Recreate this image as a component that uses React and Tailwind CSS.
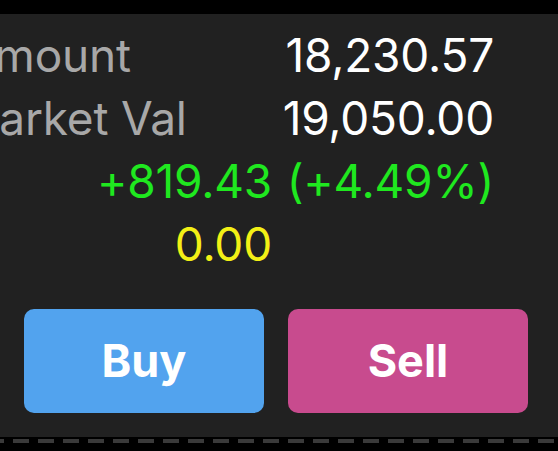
const font = { fontFamily: 'Inter, "Noto Sans", sans-serif' };

const rows = [
    { label: 'Amount', value: '18,230.57', shift: '-ml-[3px]' },
    { label: 'Market Val', value: '19,050.00', shift: '-ml-[8px]' }
];

function App() {
    return (
        <div className="w-[558px] h-[451px] bg-black overflow-hidden flex flex-col" style={font}>
            <div className="h-[14px] shrink-0" />
            <div className="bg-[#212121] pt-[10px] pb-[24px] overflow-hidden">
                {/* 持仓明细 */}
                <div className="-ml-[34px] w-[528px] grid grid-cols-[106px_200px_222px] text-[46px] leading-[63px] tracking-[-0.2px]">
                    {rows.map((row) => (
                        <div key={row.label} className="contents">
                            <div className={`text-[#a8a8a8] whitespace-nowrap ${row.shift}`}>{row.label}</div>
                            <div className="col-span-2 text-right text-white">{row.value}</div>
                        </div>
                    ))}
                    <div />
                    <div className="text-right text-[#1fe81f] whitespace-nowrap">+819.43</div>
                    <div className="text-right text-[#1fe81f] whitespace-nowrap">(+4.49%)</div>
                    <div />
                    <div className="text-right text-[#f3f016]">0.00</div>
                    <div />
                </div>
                {/* 买卖按钮 */}
                <div className="mt-[33px] pl-[24px] flex gap-[24px]">
                    <button className="w-[240px] h-[104px] rounded-[10px] bg-[#52a3ee] text-white text-[45px] font-bold">
                        Buy
                    </button>
                    <button className="w-[240px] h-[104px] rounded-[10px] bg-[#c84b8e] text-white text-[45px] font-bold">
                        Sell
                    </button>
                </div>
            </div>
            <div className="mt-[2px] h-[4px] bg-[repeating-linear-gradient(90deg,#3a3a3a_0_4px,transparent_4px_13px,#3a3a3a_13px_25px)]" />
        </div>
    );
}

export default App;
